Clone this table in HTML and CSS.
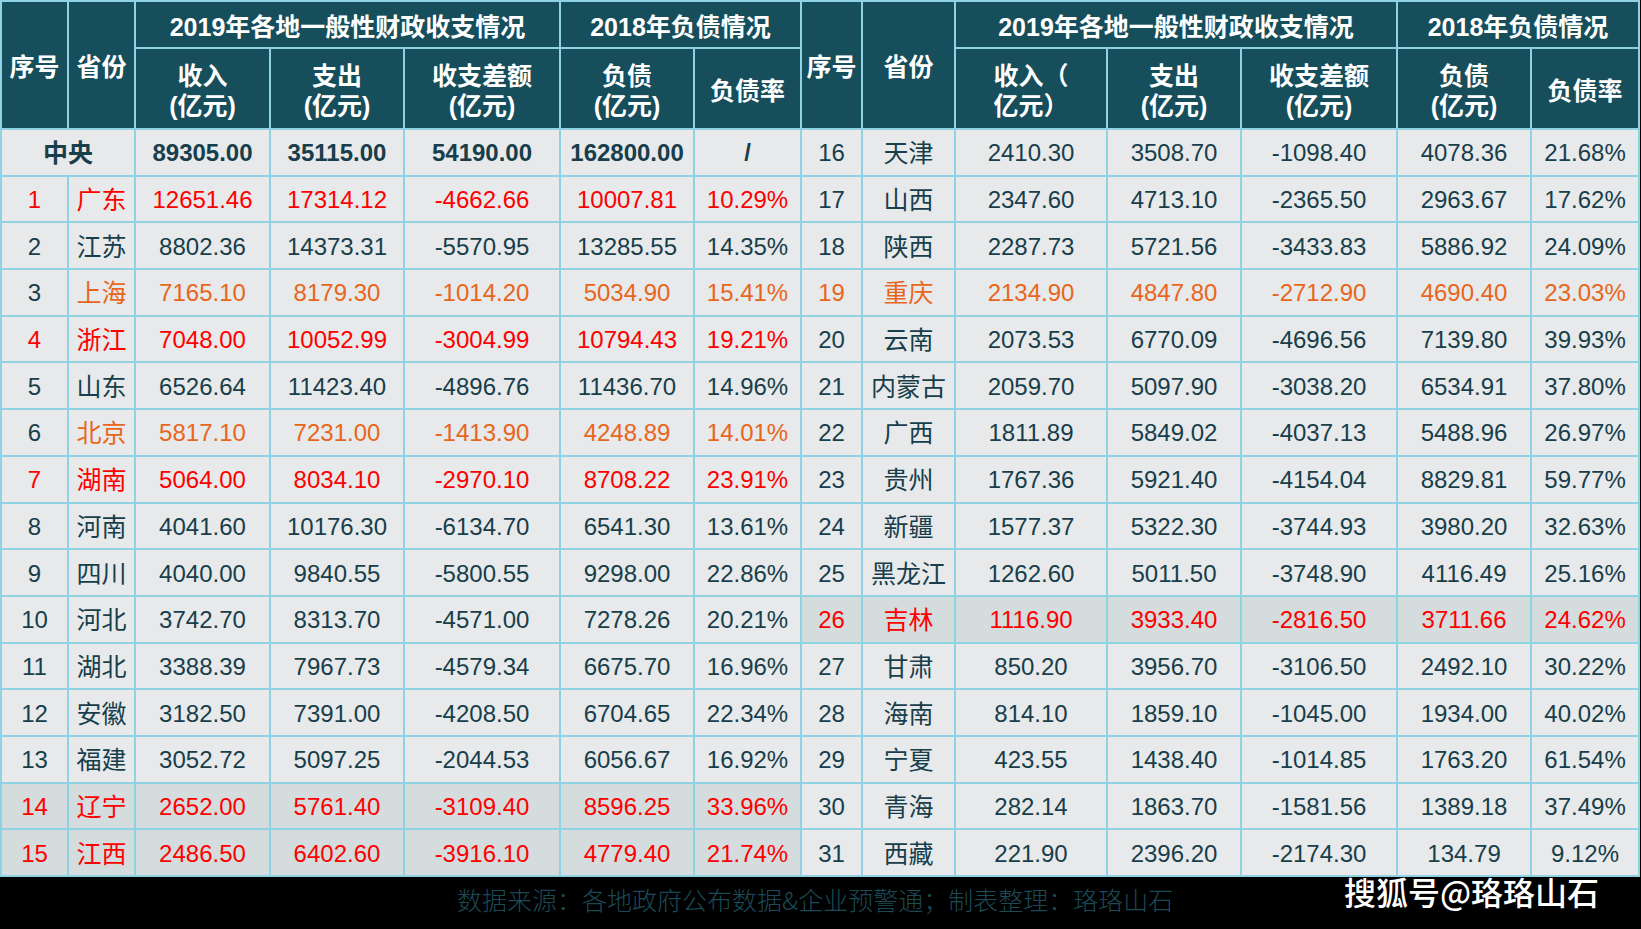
FILE: index.html
```html
<!DOCTYPE html>
<html lang="zh-CN">
<head>
<meta charset="utf-8">
<title>2019年各地一般性财政收支情况</title>
<link rel="stylesheet" href="styles.css">
</head>
<body>
<table class="sheet">
  <colgroup>
    <col class="c-idx-l"><col class="c-prov-l"><col class="c-in-l"><col class="c-out"><col class="c-diff"><col class="c-debt"><col class="c-rate">
    <col class="c-idx-r"><col class="c-prov-r"><col class="c-in-r"><col class="c-out"><col class="c-diff"><col class="c-debt"><col class="c-rate-r">
  </colgroup>
  <thead>
    <tr class="h1">
      <th rowspan="2">序号</th><th rowspan="2">省份</th><th colspan="3">2019年各地一般性财政收支情况</th><th colspan="2">2018年负债情况</th>
      <th rowspan="2">序号</th><th rowspan="2">省份</th><th colspan="3">2019年各地一般性财政收支情况</th><th colspan="2">2018年负债情况</th>
    </tr>
    <tr class="h2">
      <th>收入<br>(亿元)</th><th>支出<br>(亿元)</th><th>收支差额<br>(亿元)</th><th>负债<br>(亿元)</th><th>负债率</th>
      <th>收入（<br>亿元）</th><th>支出<br>(亿元)</th><th>收支差额<br>(亿元)</th><th>负债<br>(亿元)</th><th>负债率</th>
    </tr>
  </thead>
  <tbody>
    <tr class="central"><td colspan="2" class="bold p">中央</td><td class="bold">89305.00</td><td class="bold">35115.00</td><td class="bold">54190.00</td><td class="bold">162800.00</td><td class="bold">/</td><td>16</td><td class="p">天津</td><td>2410.30</td><td>3508.70</td><td>-1098.40</td><td>4078.36</td><td>21.68%</td></tr>
    <tr class="l-red"><td>1</td><td class="p">广东</td><td>12651.46</td><td>17314.12</td><td>-4662.66</td><td>10007.81</td><td>10.29%</td><td>17</td><td class="p">山西</td><td>2347.60</td><td>4713.10</td><td>-2365.50</td><td>2963.67</td><td>17.62%</td></tr>
    <tr><td>2</td><td class="p">江苏</td><td>8802.36</td><td>14373.31</td><td>-5570.95</td><td>13285.55</td><td>14.35%</td><td>18</td><td class="p">陕西</td><td>2287.73</td><td>5721.56</td><td>-3433.83</td><td>5886.92</td><td>24.09%</td></tr>
    <tr class="l-orange r-orange"><td>3</td><td class="p">上海</td><td>7165.10</td><td>8179.30</td><td>-1014.20</td><td>5034.90</td><td>15.41%</td><td>19</td><td class="p">重庆</td><td>2134.90</td><td>4847.80</td><td>-2712.90</td><td>4690.40</td><td>23.03%</td></tr>
    <tr class="l-red"><td>4</td><td class="p">浙江</td><td>7048.00</td><td>10052.99</td><td>-3004.99</td><td>10794.43</td><td>19.21%</td><td>20</td><td class="p">云南</td><td>2073.53</td><td>6770.09</td><td>-4696.56</td><td>7139.80</td><td>39.93%</td></tr>
    <tr><td>5</td><td class="p">山东</td><td>6526.64</td><td>11423.40</td><td>-4896.76</td><td>11436.70</td><td>14.96%</td><td>21</td><td class="p">内蒙古</td><td>2059.70</td><td>5097.90</td><td>-3038.20</td><td>6534.91</td><td>37.80%</td></tr>
    <tr class="l-orange"><td>6</td><td class="p">北京</td><td>5817.10</td><td>7231.00</td><td>-1413.90</td><td>4248.89</td><td>14.01%</td><td>22</td><td class="p">广西</td><td>1811.89</td><td>5849.02</td><td>-4037.13</td><td>5488.96</td><td>26.97%</td></tr>
    <tr class="l-red"><td>7</td><td class="p">湖南</td><td>5064.00</td><td>8034.10</td><td>-2970.10</td><td>8708.22</td><td>23.91%</td><td>23</td><td class="p">贵州</td><td>1767.36</td><td>5921.40</td><td>-4154.04</td><td>8829.81</td><td>59.77%</td></tr>
    <tr><td>8</td><td class="p">河南</td><td>4041.60</td><td>10176.30</td><td>-6134.70</td><td>6541.30</td><td>13.61%</td><td>24</td><td class="p">新疆</td><td>1577.37</td><td>5322.30</td><td>-3744.93</td><td>3980.20</td><td>32.63%</td></tr>
    <tr><td>9</td><td class="p">四川</td><td>4040.00</td><td>9840.55</td><td>-5800.55</td><td>9298.00</td><td>22.86%</td><td>25</td><td class="p">黑龙江</td><td>1262.60</td><td>5011.50</td><td>-3748.90</td><td>4116.49</td><td>25.16%</td></tr>
    <tr class="r-red r-dark"><td>10</td><td class="p">河北</td><td>3742.70</td><td>8313.70</td><td>-4571.00</td><td>7278.26</td><td>20.21%</td><td>26</td><td class="p">吉林</td><td>1116.90</td><td>3933.40</td><td>-2816.50</td><td>3711.66</td><td>24.62%</td></tr>
    <tr><td>11</td><td class="p">湖北</td><td>3388.39</td><td>7967.73</td><td>-4579.34</td><td>6675.70</td><td>16.96%</td><td>27</td><td class="p">甘肃</td><td>850.20</td><td>3956.70</td><td>-3106.50</td><td>2492.10</td><td>30.22%</td></tr>
    <tr><td>12</td><td class="p">安徽</td><td>3182.50</td><td>7391.00</td><td>-4208.50</td><td>6704.65</td><td>22.34%</td><td>28</td><td class="p">海南</td><td>814.10</td><td>1859.10</td><td>-1045.00</td><td>1934.00</td><td>40.02%</td></tr>
    <tr><td>13</td><td class="p">福建</td><td>3052.72</td><td>5097.25</td><td>-2044.53</td><td>6056.67</td><td>16.92%</td><td>29</td><td class="p">宁夏</td><td>423.55</td><td>1438.40</td><td>-1014.85</td><td>1763.20</td><td>61.54%</td></tr>
    <tr class="l-red l-dark"><td>14</td><td class="p">辽宁</td><td>2652.00</td><td>5761.40</td><td>-3109.40</td><td>8596.25</td><td>33.96%</td><td>30</td><td class="p">青海</td><td>282.14</td><td>1863.70</td><td>-1581.56</td><td>1389.18</td><td>37.49%</td></tr>
    <tr class="l-red l-dark"><td>15</td><td class="p">江西</td><td>2486.50</td><td>6402.60</td><td>-3916.10</td><td>4779.40</td><td>21.74%</td><td>31</td><td class="p">西藏</td><td>221.90</td><td>2396.20</td><td>-2174.30</td><td>134.79</td><td>9.12%</td></tr>
  </tbody>
</table>
<footer class="footer">
  <p class="source">数据来源：各地政府公布数据&amp;企业预警通；制表整理：珞珞山石</p>
  <p class="mark">搜狐号@珞珞山石</p>
</footer>
</body>
</html>
```

FILE: styles.css
```css
* { box-sizing: border-box; }
html, body { margin: 0; padding: 0; background: #000; }
body {
  width: 1641px;
  height: 929px;
  overflow: hidden;
  font-family: "Liberation Sans", "Noto Sans CJK SC", sans-serif;
}

.sheet {
  border-collapse: collapse;
  table-layout: fixed;
  width: 1640px;
}
.c-idx-l { width: 67px; }
.c-prov-l { width: 67px; }
.c-in-l { width: 135px; }
.c-out { width: 134px; }
.c-diff { width: 156px; }
.c-debt { width: 134px; }
.c-rate { width: 107px; }
.c-idx-r { width: 61px; }
.c-prov-r { width: 93px; }
.c-in-r { width: 152px; }
.c-rate-r { width: 108px; }

.sheet th,
.sheet td {
  border: 2px solid #8fd2e3;
  padding: 0;
  text-align: center;
  vertical-align: middle;
  white-space: nowrap;
}
.sheet th {
  background: #164e5c;
  color: #fff;
  font-weight: bold;
  font-size: 25px;
  line-height: 30px;
  padding-top: 4px;
}
.h1 { height: 47px; }
.h2 { height: 81px; }
.sheet tbody tr { height: 46.7px; }
.sheet td {
  background: #e7e9eb;
  color: #173e4a;
  font-size: 24px;
  line-height: 28px;
  padding-top: 2px;
}
.sheet td.p { font-size: 25px; }
.sheet td.bold { font-weight: bold; }

.l-red td:nth-child(-n+7) { color: #ff0000; }
.l-orange td:nth-child(n+2):nth-child(-n+7) { color: #e8661c; }
.r-orange td:nth-child(n+8) { color: #e8661c; }
.r-red td:nth-child(n+8) { color: #ff0000; }
.l-dark td:nth-child(-n+7) { background: #d5dcde; }
.r-dark td:nth-child(n+8) { background: #d5dcde; }

.footer {
  display: flex;
  align-items: flex-start;
  height: 54px;
  padding: 0 42px 0 457px;
}
.source {
  margin: 10px 0 0;
  font-family: "Noto Sans CJK SC", sans-serif;
  font-weight: 300;
  font-size: 25px;
  line-height: 25px;
  color: #1b4a56;
}
.mark {
  margin: -2px 0 0 auto;
  font-family: "Noto Sans CJK SC", sans-serif;
  font-weight: 500;
  font-size: 32px;
  line-height: 32px;
  color: #fff;
}
```
